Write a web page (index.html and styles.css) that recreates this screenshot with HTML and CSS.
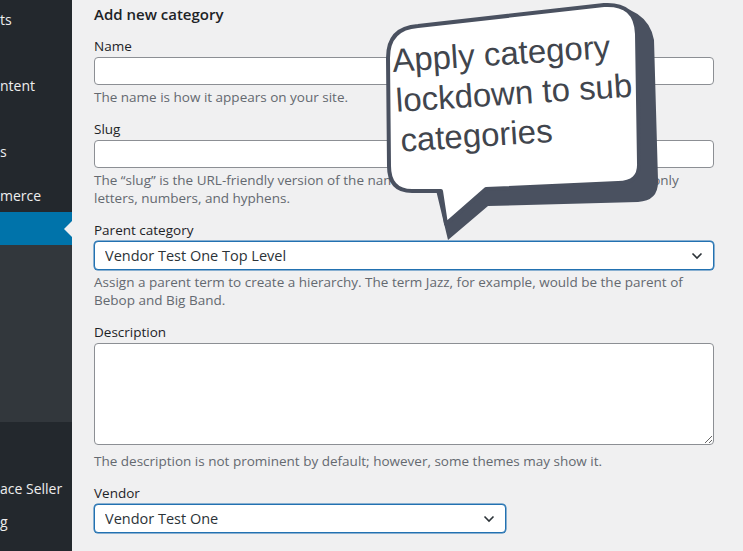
FILE: index.html
```html
<!DOCTYPE html>
<html lang="en">
<head>
  <meta charset="UTF-8">
  <meta name="viewport" content="width=device-width, initial-scale=1.0">
  <title>Add new category</title>
  <link rel="stylesheet" href="styles.css">
</head>
<body>
  <div class="screen">
    <nav class="adminmenu">
      <ul>
        <li class="menu-item">ts</li>
        <li class="menu-item"></li>
        <li class="menu-item">ntent</li>
        <li class="menu-item"></li>
        <li class="menu-item">s</li>
        <li class="menu-sep"></li>
        <li class="menu-item">merce</li>
        <li class="menu-item current"></li>
        <li class="submenu"></li>
        <li class="menu-item gap"></li>
        <li class="menu-item">ace Seller</li>
        <li class="menu-item">g</li>
      </ul>
    </nav>

    <main class="content">
      <div class="form-wrap">
        <h2>Add new category</h2>
        <form>
          <div class="form-field">
            <label for="tag-name">Name</label>
            <input type="text" id="tag-name">
            <p class="description">The name is how it appears on your site.</p>
          </div>
          <div class="form-field">
            <label for="tag-slug">Slug</label>
            <input type="text" id="tag-slug">
            <p class="description">The &ldquo;slug&rdquo; is the URL-friendly version of the name. It is usually all lowercase and contains only letters, numbers, and hyphens.</p>
          </div>
          <div class="form-field">
            <label for="parent">Parent category</label>
            <div class="select-wrap">
              <select id="parent">
                <option>Vendor Test One Top Level</option>
              </select>
              <svg class="chevron" viewBox="0 0 12 8" width="12" height="8"><path d="M1.5 1.5 L6 6 L10.5 1.5" fill="none" stroke="#2c3338" stroke-width="1.6"/></svg>
            </div>
            <p class="description">Assign a parent term to create a hierarchy. The term Jazz, for example, would be the parent of Bebop and Big Band.</p>
          </div>
          <div class="form-field">
            <label for="tag-description">Description</label>
            <textarea id="tag-description"></textarea>
            <p class="description desc-after-area">The description is not prominent by default; however, some themes may show it.</p>
          </div>
          <div class="form-field">
            <label for="vendor">Vendor</label>
            <div class="select-wrap vendor">
              <select id="vendor">
                <option>Vendor Test One</option>
              </select>
              <svg class="chevron" viewBox="0 0 12 8" width="12" height="8"><path d="M1.5 1.5 L6 6 L10.5 1.5" fill="none" stroke="#2c3338" stroke-width="1.6"/></svg>
            </div>
          </div>
        </form>
      </div>
    </main>

    <!-- callout laid over the form -->
    <svg class="callout" viewBox="0 0 743 551" width="743" height="551">
      <path class="callout-shadow" d="M600 4 Q648 6 654 40 L658 180 Q659 201 638 202 L488 206 L448 240 L436 190 Z"/>
      <path class="callout-body" d="M388 58 Q388 28 418 26 L604 5 Q636 3 637 34 L639 163 Q640 183 618 183 L486 189 L446 224 L441 191 L412 191 Q389 191 389 166 Z"/>
      <g class="callout-text" transform="rotate(-3.7 393 72)">
        <text x="393" y="72">Apply category</text>
        <text x="394" y="112">lockdown to sub</text>
        <text x="396" y="152">categories</text>
      </g>
    </svg>
  </div>
</body>
</html>
```

FILE: styles.css
```css
body {
  margin: 0;
  background: #f0f0f1;
  font-family: "Open Sans", "Noto Sans", sans-serif;
  font-size: 13.5px;
  color: #1d2327;
}
.screen {
  position: relative;
  display: flex;
  height: 551px;
  overflow: hidden;
}

/* admin menu */
.adminmenu {
  flex: none;
  width: 72px;
  background: #23282d;
  color: #eee;
  font-size: 14px;
  overflow: hidden;
}
.adminmenu ul {
  list-style: none;
  margin: 0;
  padding: 3px 0 0;
}
.menu-item {
  height: 33px;
  line-height: 33px;
  white-space: nowrap;
}
.menu-sep {
  height: 11px;
}
.menu-item.current {
  position: relative;
  background: #0073aa;
}
.menu-item.current::after {
  content: "";
  position: absolute;
  right: 0;
  top: 9px;
  border: 8px solid transparent;
  border-right-color: #f0f0f1;
  border-left-width: 0;
}
.submenu {
  height: 177px;
  background: #32373c;
}
.menu-item.gap {
  height: 50px;
}

/* form */
.content {
  flex: 1;
  padding: 4px 29px 0 22px;
}
.form-wrap h2 {
  margin: 0 0 13px;
  font-size: 15px;
  font-weight: 600;
  line-height: 20px;
  color: #1d2327;
}
.form-field {
  margin-bottom: 14px;
}
.form-field label {
  display: block;
  line-height: 18px;
  margin-bottom: 2px;
}
.form-field input[type="text"],
.form-field textarea {
  display: block;
  width: 100%;
  box-sizing: border-box;
  margin: 0;
  background: #fff;
  border: 1px solid #8c8f94;
  border-radius: 4px;
  font: inherit;
}
.form-field input[type="text"] {
  height: 28px;
}
.form-field textarea {
  height: 102px;
}
.description {
  margin: 3px 0 0;
  line-height: 18px;
  color: #646970;
}
.desc-after-area {
  margin-top: 7px;
}
.select-wrap {
  position: relative;
}
.select-wrap select {
  display: block;
  width: 100%;
  height: 29px;
  margin: 0;
  padding: 0 28px 0 10px;
  box-sizing: border-box;
  -webkit-appearance: none;
  appearance: none;
  background: #fff;
  border: 1px solid #2271b1;
  border-radius: 4px;
  box-shadow: 0 0 0 0.5px #2271b1;
  font-family: inherit;
  font-size: 14.5px;
  color: #2c3338;
}
.select-wrap.vendor {
  width: 412px;
}
.chevron {
  position: absolute;
  right: 11px;
  top: 11px;
  pointer-events: none;
}

/* callout */
.callout {
  position: absolute;
  left: 0;
  top: 0;
  pointer-events: none;
}
.callout-shadow {
  fill: #4a5160;
}
.callout-body {
  fill: #fff;
  stroke: #4a5160;
  stroke-width: 4;
  stroke-linejoin: round;
}
.callout-text {
  font-family: "Liberation Sans", Arial, sans-serif;
  font-size: 33px;
  fill: #41454d;
}
```
